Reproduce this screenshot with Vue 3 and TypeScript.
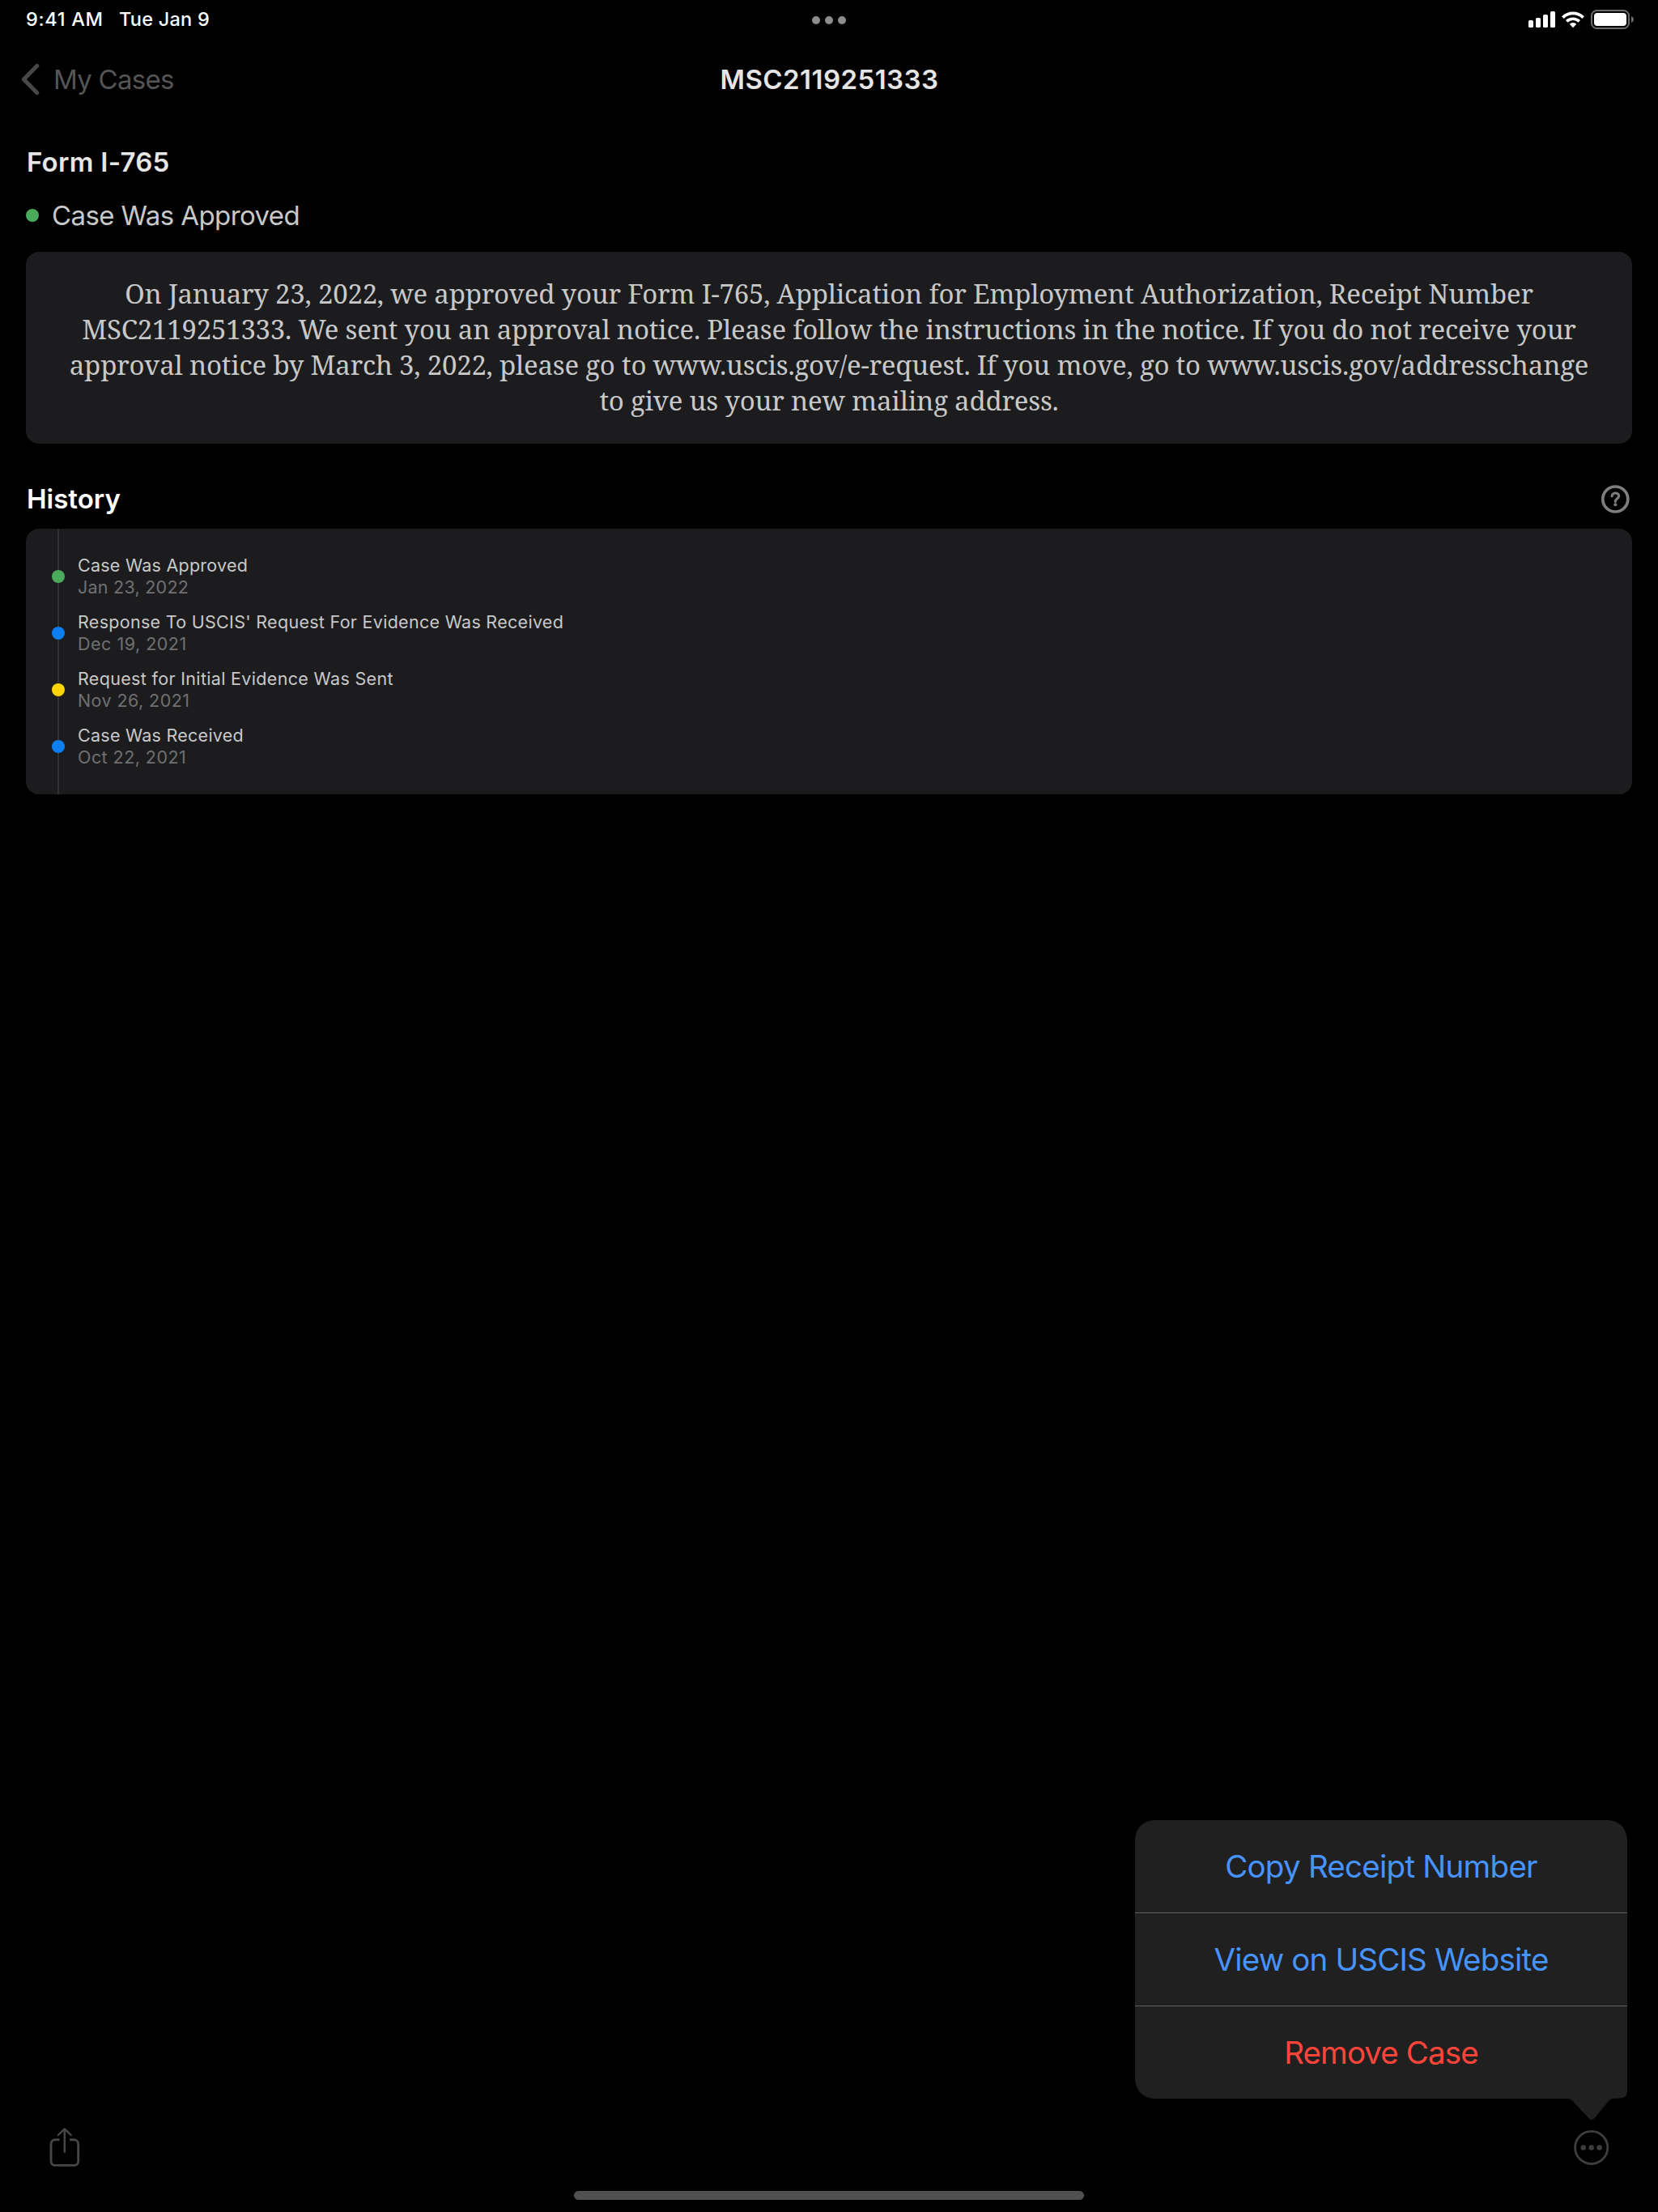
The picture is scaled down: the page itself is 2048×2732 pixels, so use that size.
<script setup lang="ts">
interface HistoryEvent {
  title: string
  date: string
  tone: 'green' | 'blue' | 'yellow'
  /** letter spacing of title and date, in px */
  tracking: [number, number]
}

interface MenuAction {
  label: string
  tracking: number
  destructive?: boolean
}

const receiptNumber = 'MSC2119251333'

const noticeLines: string[] = [
  'On January 23, 2022, we approved your Form I-765, Application for Employment Authorization, Receipt Number',
  `${receiptNumber}. We sent you an approval notice. Please follow the instructions in the notice. If you do not receive your`,
  'approval notice by March 3, 2022, please go to www.uscis.gov/e-request. If you move, go to www.uscis.gov/addresschange',
  'to give us your new mailing address.',
]

const history: HistoryEvent[] = [
  { title: 'Case Was Approved', date: 'Jan 23, 2022', tone: 'green', tracking: [0.24, 0.25] },
  {
    title: "Response To USCIS' Request For Evidence Was Received",
    date: 'Dec 19, 2021',
    tone: 'blue',
    tracking: [0.29, 0.5],
  },
  {
    title: 'Request for Initial Evidence Was Sent',
    date: 'Nov 26, 2021',
    tone: 'yellow',
    tracking: [0.33, 0.42],
  },
  { title: 'Case Was Received', date: 'Oct 22, 2021', tone: 'blue', tracking: [0.25, 0.45] },
]

const actions: MenuAction[] = [
  { label: 'Copy Receipt Number', tracking: -0.75 },
  { label: 'View on USCIS Website', tracking: -0.82 },
  { label: 'Remove Case', tracking: -0.88, destructive: true },
]
</script>

<template>
  <div class="screen">
    <header class="status-bar">
      <div class="clock">
        <span class="time">9:41 AM</span>
        <span class="date">Tue Jan 9</span>
      </div>
      <div class="multitask"><i /><i /><i /></div>
      <svg class="indicators" width="132" height="28" viewBox="1888 10 132 28">
        <g fill="#fff">
          <rect x="1888" y="25" width="6" height="9" rx="1.6" />
          <rect x="1897" y="22" width="6" height="12" rx="1.6" />
          <rect x="1906" y="18" width="6" height="16" rx="1.6" />
          <rect x="1915" y="14" width="6" height="20" rx="1.6" />
          <path d="M1943 34.2l-3.8-3.9q-.6-.7.2-1.1q3.6-2.6 7.2 0q.8.4.2 1.1z" />
        </g>
        <g fill="none" stroke="#fff" stroke-width="3.7">
          <path d="M1930.4 21.6a18 18 0 0 1 25.2 0" />
          <path d="M1935.2 26.4a11.2 11.2 0 0 1 15.6 0" />
        </g>
        <rect x="1966" y="13" width="46" height="22" rx="6.5" fill="none" stroke="#6b6b6b" stroke-width="2" />
        <rect x="1969" y="16" width="40" height="16" rx="4" fill="#fff" />
        <path d="M2015 20c4 1.4 4 6.6 0 8z" fill="#6b6b6b" />
      </svg>
    </header>

    <nav class="nav-bar">
      <button class="back" type="button">
        <svg width="24" height="40" viewBox="0 0 24 40">
          <path d="M19.8 3.3L3.4 20l16.4 16.7" fill="none" stroke="#484848" stroke-width="5" stroke-linecap="round" stroke-linejoin="round" />
        </svg>
        <span>My Cases</span>
      </button>
      <h1>{{ receiptNumber }}</h1>
    </nav>

    <main class="content">
      <h2 class="form-name">Form I-765</h2>
      <div class="case-status">
        <i class="dot green" />
        <span>Case Was Approved</span>
      </div>

      <section class="card notice">
        <p v-for="line in noticeLines" :key="line">{{ line }}</p>
      </section>

      <div class="section-head">
        <h2>History</h2>
        <svg width="36" height="36" viewBox="-18.3 -18.5 36 36" fill="none" stroke="#7e7e80">
          <circle r="15.5" stroke-width="3.7" />
          <path d="M-4.2 -3.7C-3.9 -8.8 4.5 -8.7 4.4 -3.8C4.3 -.9 .1 -.6 0 2.9" stroke-width="3.1" stroke-linecap="round" />
          <circle cy="6.8" r="2" fill="#7e7e80" stroke="none" />
        </svg>
      </div>

      <section class="card timeline">
        <article v-for="event in history" :key="event.date" class="event">
          <i class="dot" :class="event.tone" />
          <div>
            <p class="event-title" :style="{ letterSpacing: event.tracking[0] + 'px' }">{{ event.title }}</p>
            <p class="event-date" :style="{ letterSpacing: event.tracking[1] + 'px' }">{{ event.date }}</p>
          </div>
        </article>
      </section>
    </main>

    <footer class="toolbar">
      <svg width="40" height="52" viewBox="60 2626 40 52" fill="none" stroke="#464646" stroke-width="2.9">
        <path d="M73.5 2642.7H68.2a5.2 5.2 0 0 0-5.2 5.2v21.3a5.2 5.2 0 0 0 5.2 5.2h23.3a5.2 5.2 0 0 0 5.2-5.2v-21.3a5.2 5.2 0 0 0-5.2-5.2H86" />
        <path d="M79.8 2657.7v-28M72 2636.9l7.8-7.5l7.8 7.5" stroke-width="2.5" stroke-linecap="round" stroke-linejoin="round" />
      </svg>
      <svg width="44" height="44" viewBox="-21.7 -22.4 44 44" fill="#3e3e3d">
        <circle r="20.1" fill="none" stroke="#3e3e3d" stroke-width="2.8" />
        <circle cx="-9.9" r="3.2" />
        <circle r="3.2" />
        <circle cx="9.9" r="3.2" />
      </svg>
    </footer>
    <div class="home-indicator" />

    <div class="popover">
      <svg class="bubble" width="608" height="371" viewBox="0 0 608 371">
        <path
          d="M26 0H582C598 0 608 10 608 26V332C608 342 605 343 598 343.5C591 344 589 343 585 347L568 367.5Q564 372.5 560 367.5L542 348.5C539 345 537.5 344 533 344H26C10 344 0 334 0 318V26C0 10 10 0 26 0Z"
          fill="#202020"
        />
      </svg>
      <button
        v-for="action in actions"
        :key="action.label"
        type="button"
        class="action"
        :class="{ destructive: action.destructive }"
        :style="{ letterSpacing: action.tracking + 'px' }"
      >
        {{ action.label }}
      </button>
    </div>
  </div>
</template>

<style>
body {
  background: #000;
}
</style>

<style scoped>
.screen {
  position: relative;
  box-sizing: border-box;
  width: 2048px;
  height: 2732px;
  display: flex;
  flex-direction: column;
  overflow: hidden;
  background: #000;
  color: #c8c8c8;
  font-family: Inter, 'Liberation Sans', sans-serif;
  font-size: 33px;
}

h1,
h2,
p {
  margin: 0;
  font-size: inherit;
}

button {
  margin: 0;
  padding: 0;
  border: 0;
  background: none;
  font: inherit;
}

svg {
  display: block;
}

.status-bar {
  height: 48px;
  padding: 0 28px 0 32px;
  display: grid;
  grid-template-columns: 1fr auto 1fr;
  align-items: center;
  color: #fff;
  font-size: 23.5px;
  font-weight: 500;
  line-height: 48px;
}

.clock {
  display: flex;
  height: 48px;
}

.time {
  width: 115px;
  letter-spacing: 0.68px;
}

.date {
  letter-spacing: 0.24px;
}

.multitask {
  display: flex;
  gap: 6px;
  margin: 2px 4px 0 0;
}

.multitask i {
  width: 10px;
  height: 10px;
  border-radius: 50%;
  background: #8d8d8d;
}

.indicators {
  justify-self: end;
}

.nav-bar {
  height: 100px;
  padding: 0 26px;
  display: grid;
  grid-template-columns: 1fr auto 1fr;
  align-items: center;
}

.back {
  display: flex;
  align-items: center;
  gap: 16px;
  color: #555;
  letter-spacing: -0.73px;
}

.nav-bar h1 {
  padding-left: 1px;
  color: #e5e5e5;
  font-weight: 600;
  letter-spacing: 0.45px;
}

.content {
  padding: 32px 32px 0;
}

.form-name {
  padding-left: 1px;
  line-height: 40px;
  color: #e6e6e6;
  font-weight: 600;
  letter-spacing: 0.27px;
}

.case-status {
  display: flex;
  align-items: center;
  gap: 16px;
  margin-top: 26px;
  line-height: 40px;
  letter-spacing: -0.6px;
}

.dot {
  flex: none;
  width: 16px;
  height: 16px;
  border-radius: 50%;
}

.green {
  background: #4bab5d;
}

.blue {
  background: #0d7ff2;
}

.yellow {
  background: #fed502;
}

.card {
  box-sizing: border-box;
  border-radius: 16px;
  background: #1c1c1e;
}

.notice {
  height: 237px;
  margin-top: 25px;
  padding-top: 30px;
  font-family: 'Noto Serif', 'Liberation Serif', serif;
  letter-spacing: -0.22px;
  line-height: 44px;
  text-align: center;
  white-space: nowrap;
}

.section-head {
  display: flex;
  align-items: center;
  justify-content: space-between;
  margin-top: 48px;
  padding: 0 3px 0 1px;
  line-height: 40px;
  color: #fff;
}

.section-head h2 {
  font-weight: 600;
}

.timeline {
  height: 328px;
  margin-top: 17px;
  padding: 32px;
  display: flex;
  flex-direction: column;
  gap: 16px;
  background: linear-gradient(#323234, #323234) 39px 0 / 2px 100% no-repeat #1c1c1e;
}

.event {
  display: flex;
  align-items: center;
  gap: 16px;
  font-size: 21.5px;
  line-height: 27px;
}

.event-date {
  color: #707072;
}

.toolbar {
  display: flex;
  align-items: center;
  justify-content: space-between;
  margin-top: auto;
  padding: 0 60px;
}

.home-indicator {
  width: 630px;
  height: 11px;
  margin: 28px auto 15px;
  border-radius: 6px;
  background: #505050;
}

.popover {
  position: absolute;
  right: 38px;
  bottom: 140px;
  width: 608px;
  height: 344px;
  display: flex;
  flex-direction: column;
}

.bubble {
  position: absolute;
  top: 0;
  left: 0;
}

.action {
  position: relative;
  flex: 1;
  color: #4793ff;
  font-size: 38.5px;
}

.action + .action {
  border-top: 1px solid #606060;
}

.destructive {
  color: #ff453a;
}
</style>
